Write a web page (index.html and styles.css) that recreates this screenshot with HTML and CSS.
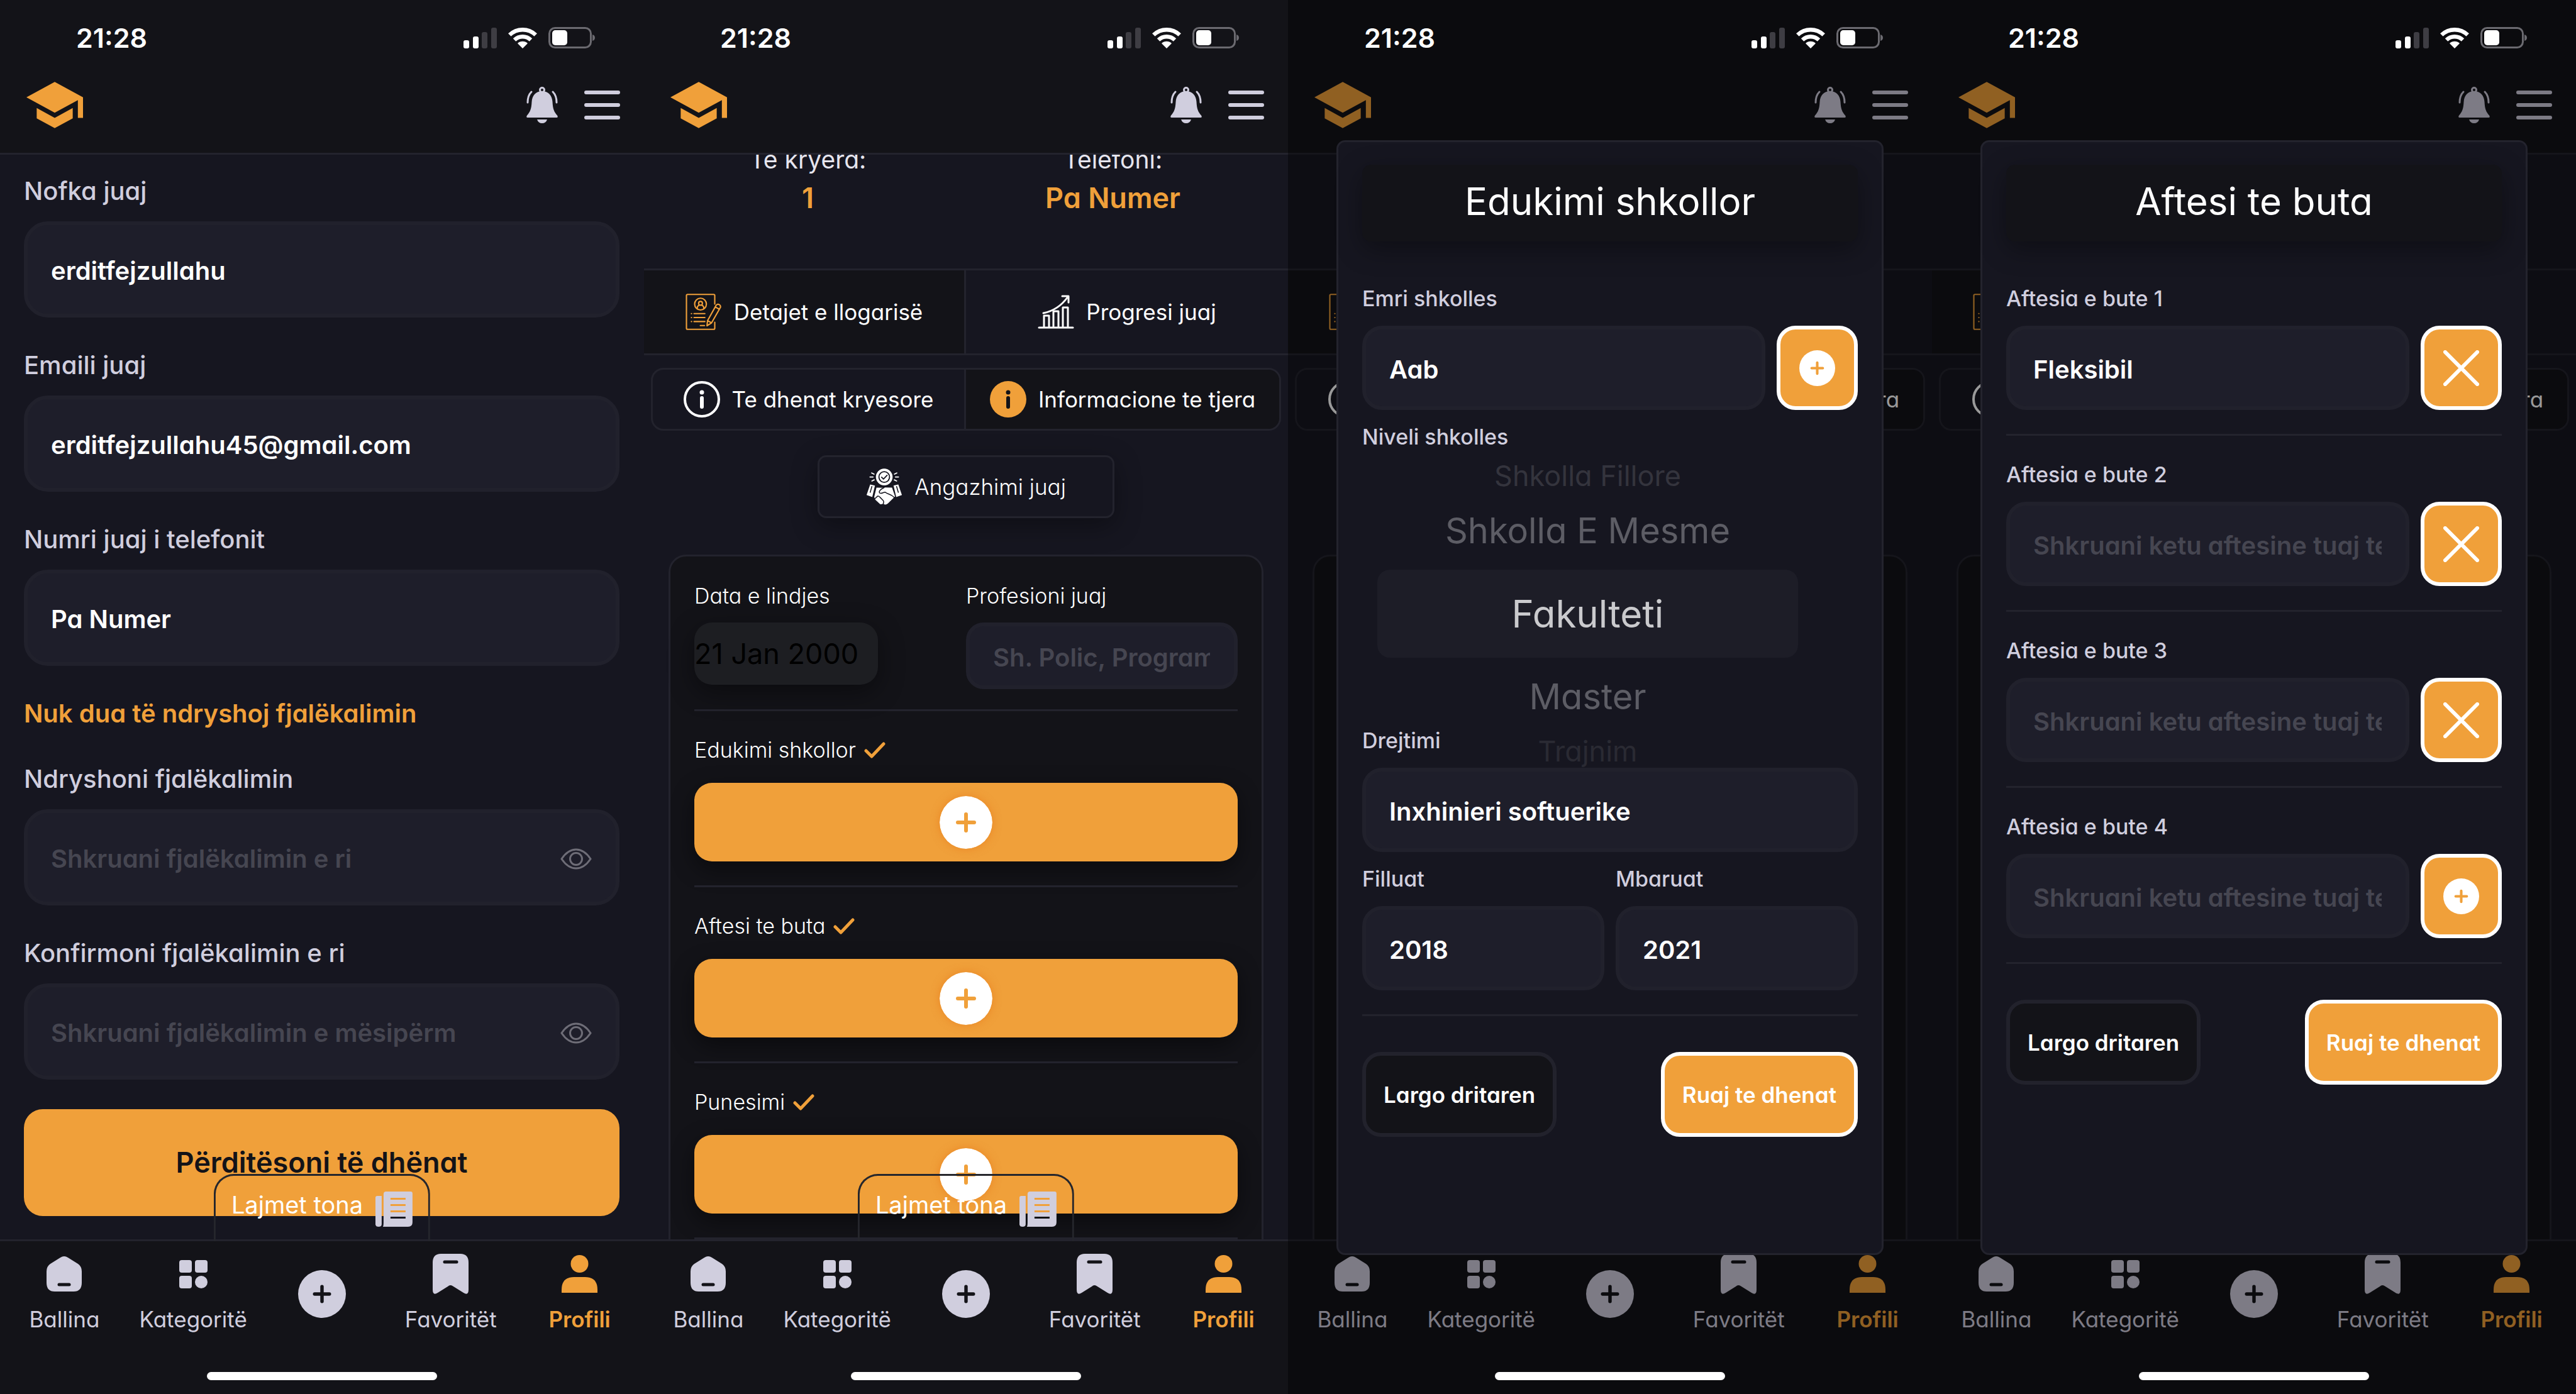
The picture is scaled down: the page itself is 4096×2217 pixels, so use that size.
FILE: index.html
```html
<!DOCTYPE html>
<html lang="sq">
<head>
<meta charset="utf-8">
<title>Profili</title>
<meta name="viewport" content="width=device-width, initial-scale=1">
<link rel="stylesheet" href="styles.css">
</head>
<body>

<svg class="sprite" aria-hidden="true">
  <symbol id="signal" viewBox="0 0 53 33">
    <g fill="currentColor"><rect y="20" width="9" height="13" rx="3"/><rect x="15" y="14" width="9" height="19" rx="3"/></g>
    <g fill="#3e3d43"><rect x="29" y="7" width="9" height="26" rx="3"/><rect x="44" width="9" height="33" rx="3"/></g>
  </symbol>
  <symbol id="wifi" viewBox="0 0 46 34">
    <g fill="none" stroke="currentColor" stroke-width="6.500"><path d="M2.300 12.500A30 30 0 0 1 43.700 12.500"/><path d="M10 20.500A19 19 0 0 1 36 20.500"/></g>
    <path fill="currentColor" d="M23 34 15 26A11.500 11.500 0 0 1 31 26Z"/>
  </symbol>
  <symbol id="battery" viewBox="0 0 74 34">
    <rect x="1.500" y="1.500" width="66" height="31" rx="9" fill="none" stroke="#6b6a70" stroke-width="3"/>
    <rect x="6" y="5" width="24" height="24" rx="5" fill="currentColor"/>
    <path d="M70 12Q74 13 74 17T70 22Z" fill="#6b6a70"/>
  </symbol>
  <symbol id="school" viewBox="1 3 22 18">
    <path fill="currentColor" d="M5 13.180v4L12 21l7-3.820v-4L12 17l-7-3.820zM12 3 1 9l11 6 9-4.910V17h2V9L12 3z"/>
  </symbol>
  <symbol id="bell" viewBox="0 0 50 58">
    <path fill="currentColor" d="M25 7C15 7 9 14 8.500 24C8 35 6 40 1 45.500Q-1 49 2 49H48Q51 49 49 45.500C44 40 42 35 41.500 24C41 14 35 7 25 7ZM17 52H33Q31 58 25 58T17 52Z"/>
    <g fill="none" stroke="currentColor" stroke-width="3" stroke-linecap="round"><circle cx="25" cy="5" r="3.500"/><path d="M8 8C4 12 2 18 2 25"/><path d="M42 8C46 12 48 18 48 25"/></g>
  </symbol>
  <symbol id="menu" viewBox="0 0 57 46">
    <path d="M3 3H54M3 23H54M3 43H54" fill="none" stroke="currentColor" stroke-width="6" stroke-linecap="round"/>
  </symbol>
  <symbol id="account" viewBox="36 37 190 192">
    <g fill="none" stroke="currentColor" stroke-width="7" stroke-linecap="round" stroke-linejoin="round">
      <path d="M189 92V47Q189 41 183 41H46Q40 41 40 47V219Q40 225 46 225H183Q189 225 189 219V188"/>
      <circle cx="114" cy="92" r="31"/><circle cx="114" cy="88" r="10"/>
      <path d="M97 116V110Q98 101 107 98M131 116V110Q130 101 121 98"/>
      <path d="M80 142H137M80 163H137M80 184H137M66 142H67M66 163H67M66 184H67M113 205H135"/>
      <path d="M148 206 151 179 197 97A13 13 0 0 1 219 109L172 191ZM151 179 172 191M191 107 213 119"/>
    </g>
  </symbol>
  <symbol id="progress" viewBox="0 0 58 54">
    <g fill="none" stroke="currentColor" stroke-width="3" stroke-linecap="round" stroke-linejoin="round">
      <path d="M2 52H56"/><path d="M10 51V33H18V51M25 51V26H33V51M40 51V20H48V51"/>
      <path d="M9 29C24 26 38 17 48 3M39 2H49V12"/>
    </g>
  </symbol>
  <symbol id="info" viewBox="0 0 58 58">
    <circle cx="29" cy="29" r="27" fill="none" stroke="currentColor" stroke-width="4"/>
    <circle cx="29" cy="18" r="3.500" fill="currentColor"/><path d="M29 27V41" stroke="currentColor" stroke-width="6" stroke-linecap="round"/>
  </symbol>
  <symbol id="info-filled" viewBox="0 0 58 58">
    <circle cx="29" cy="29" r="29" fill="currentColor"/>
    <circle cx="29" cy="18" r="3.500" fill="#131318"/><path d="M29 27V41" stroke="#131318" stroke-width="6" stroke-linecap="round"/>
  </symbol>
  <symbol id="handshake" viewBox="36 37 190 192">
    <circle cx="131" cy="82" r="44" fill="currentColor"/>
    <circle cx="131" cy="82" r="28" fill="none" stroke="#161620" stroke-width="6"/>
    <g fill="none" stroke-linecap="round" stroke-linejoin="round">
      <path d="M117 83 127 93 146 73" stroke="#161620" stroke-width="6"/>
      <path d="M65 61 77 67M56 82H72M66 103 78 97M197 61 185 67M206 82H190M196 103 184 97" stroke="currentColor" stroke-width="6"/>
    </g>
    <path fill="currentColor" d="M57 121 82 127 68 188 38 177ZM205 121 180 127 194 188 224 177ZM90 138 125 139 137 137 172 138 188 184 151 221Q138 232 128 224L110 226 84 202 78 188Z"/>
    <g fill="none" stroke="#161620" stroke-width="5" stroke-linecap="round" stroke-linejoin="round">
      <path d="M66 132 57 163M196 132 205 163"/>
      <path d="M130 138C112 146 100 158 107 166C114 173 126 162 136 162C152 176 162 168 184 190"/>
      <path d="M82 196 96 183Q103 182 108 188L126 207Q131 215 124 226"/>
    </g>
  </symbol>
  <symbol id="check" viewBox="0 0 34 26">
    <path d="M3 14 12 23 31 3" fill="none" stroke="currentColor" stroke-width="5" stroke-linecap="round" stroke-linejoin="round"/>
  </symbol>
  <symbol id="plus" viewBox="0 0 84 84">
    <circle cx="42" cy="42" r="42" fill="currentColor"/>
    <path class="cut" d="M42 29V55M29 42H55" fill="none" stroke-width="6" stroke-linecap="round"/>
  </symbol>
  <symbol id="cross" viewBox="0 0 58 58">
    <path d="M3 3 55 55M55 3 3 55" stroke="currentColor" stroke-width="6" stroke-linecap="round"/>
  </symbol>
  <symbol id="eye" viewBox="0 0 50 34">
    <g fill="none" stroke="currentColor" stroke-width="3"><path d="M2 17Q12 2 25 2T48 17Q38 32 25 32T2 17Z"/><circle cx="25" cy="17" r="9.500"/></g>
  </symbol>
  <symbol id="news" viewBox="0 0 59 56">
    <path fill="currentColor" fill-rule="evenodd" d="M3 7H10V52Q10 56 5 56T0 51V10Q0 7 3 7ZM17 0H56Q59 0 59 3V49Q59 56 52 56H12Q13 54 13 50V4Q13 0 17 0ZM24 10V13H48V10ZM24 20V23H48V20ZM24 30V33H48V30ZM24 40V43H48V40Z"/>
  </symbol>
  <symbol id="home" viewBox="0 0 56 56">
    <path fill="currentColor" d="M28 0Q31 0 34 2L50 12Q56 16 56 24V42Q56 56 43 56H13Q0 56 0 42V24Q0 16 6 12L22 2Q25 0 28 0Z"/>
    <path d="M20 45H36" stroke="#131318" stroke-width="5" stroke-linecap="round"/>
  </symbol>
  <symbol id="grid" viewBox="0 0 45 45">
    <g fill="currentColor"><rect width="20" height="20" rx="4"/><rect x="25" width="20" height="20" rx="4"/><rect y="25" width="20" height="20" rx="4"/><circle cx="35" cy="35" r="10"/></g>
  </symbol>
  <symbol id="bookmark" viewBox="0 0 57 64">
    <path fill="currentColor" d="M13 0H44Q57 0 57 14V57Q57 67 49 62L33 52Q28 48 24 52L8 62Q0 67 0 57V14Q0 0 13 0Z"/>
    <path d="M19 13H38" stroke="#131318" stroke-width="5" stroke-linecap="round"/>
  </symbol>
  <symbol id="person" viewBox="0 0 57 60">
    <path fill="currentColor" d="M0 60V55Q0 35 20 35H37Q57 35 57 55V60Z"/><circle cx="28.500" cy="14" r="14" fill="currentColor"/>
  </symbol>
</svg>

<div class="board">

  <section class="phone">
    <div class="status"><time>21:28</time><div class="status-icons"><svg class="i-signal"><use href="#signal"/></svg><svg class="i-wifi"><use href="#wifi"/></svg><svg class="i-battery"><use href="#battery"/></svg></div></div>
    <header class="topbar">
      <a href="#" class="brand" aria-label="Kreu"><svg><use href="#school"/></svg></a>
      <button class="icon-btn" aria-label="Njoftimet"><svg class="i-bell"><use href="#bell"/></svg></button>
      <button class="icon-btn" aria-label="Menu"><svg class="i-menu"><use href="#menu"/></svg></button>
    </header>
    <main class="content">
      <form class="account-form">
        <div class="group"><label for="nick">Nofka juaj</label><div class="field"><input id="nick" type="text" value="erditfejzullahu"></div></div>
        <div class="group"><label for="mail">Emaili juaj</label><div class="field"><input id="mail" type="text" value="erditfejzullahu45@gmail.com"></div></div>
        <div class="group"><label for="tel">Numri juaj i telefonit</label><div class="field"><input id="tel" type="text" value="Pa Numer"></div></div>
        <a href="#" class="toggle-link">Nuk dua të ndryshoj fjalëkalimin</a>
        <div class="group"><label for="pw1">Ndryshoni fjalëkalimin</label><div class="field"><input id="pw1" type="password" placeholder="Shkruani fjalëkalimin e ri"><button type="button" class="eye" aria-label="Shfaq"><svg><use href="#eye"/></svg></button></div></div>
        <div class="group"><label for="pw2">Konfirmoni fjalëkalimin e ri</label><div class="field"><input id="pw2" type="password" placeholder="Shkruani fjalëkalimin e mësipërm"><button type="button" class="eye" aria-label="Shfaq"><svg><use href="#eye"/></svg></button></div></div>
        <button type="button" class="submit">Përditësoni të dhënat</button>
      </form>
    </main>
    <nav class="bottom">
      <a href="#" class="news">Lajmet tona<svg><use href="#news"/></svg></a>
      <div class="tabs">
        <a href="#"><span class="glyph"><svg class="i-home"><use href="#home"/></svg></span>Ballina</a>
        <a href="#"><span class="glyph"><svg class="i-grid"><use href="#grid"/></svg></span>Kategoritë</a>
        <a href="#" aria-label="Shto"><svg class="i-plus"><use href="#plus"/></svg></a>
        <a href="#"><span class="glyph"><svg class="i-bookmark"><use href="#bookmark"/></svg></span>Favoritët</a>
        <a href="#" class="active"><span class="glyph"><svg class="i-person"><use href="#person"/></svg></span>Profili</a>
      </div>
      <span class="home-bar"></span>
    </nav>
  </section>

  <section class="phone">
    <div class="status"><time>21:28</time><div class="status-icons"><svg class="i-signal"><use href="#signal"/></svg><svg class="i-wifi"><use href="#wifi"/></svg><svg class="i-battery"><use href="#battery"/></svg></div></div>
    <header class="topbar">
      <a href="#" class="brand" aria-label="Kreu"><svg><use href="#school"/></svg></a>
      <button class="icon-btn" aria-label="Njoftimet"><svg class="i-bell"><use href="#bell"/></svg></button>
      <button class="icon-btn" aria-label="Menu"><svg class="i-menu"><use href="#menu"/></svg></button>
    </header>
    <main class="content">
      <dl class="stats">
        <div><dt>Te kryera:</dt><dd>1</dd></div>
        <div><dt>Telefoni:</dt><dd>Pa Numer</dd></div>
      </dl>
      <div class="switch">
        <button class="on"><svg class="accent"><use href="#account"/></svg>Detajet e llogarisë</button>
        <button><svg><use href="#progress"/></svg>Progresi juaj</button>
      </div>
      <div class="switch pills">
        <button><svg><use href="#info"/></svg>Te dhenat kryesore</button>
        <button class="on"><svg class="accent"><use href="#info-filled"/></svg>Informacione te tjera</button>
      </div>
      <button class="engage"><svg><use href="#handshake"/></svg>Angazhimi juaj</button>
      <div class="card">
        <div class="pair">
          <div class="cell"><label for="dob">Data e lindjes</label><input id="dob" class="date" type="text" value="21 Jan 2000"></div>
          <div class="cell"><label for="job">Profesioni juaj</label><div class="field short"><input id="job" type="text" placeholder="Sh. Polic, Programer"></div></div>
        </div>
        <hr>
        <div class="entry"><h3>Edukimi shkollor<svg><use href="#check"/></svg></h3><button class="add" aria-label="Shto edukimin"><svg><use href="#plus"/></svg></button></div>
        <hr>
        <div class="entry"><h3>Aftesi te buta<svg><use href="#check"/></svg></h3><button class="add" aria-label="Shto aftesi"><svg><use href="#plus"/></svg></button></div>
        <hr>
        <div class="entry"><h3>Punesimi<svg><use href="#check"/></svg></h3><button class="add" aria-label="Shto punesimin"><svg><use href="#plus"/></svg></button></div>
        <hr>
      </div>
    </main>
    <nav class="bottom">
      <a href="#" class="news">Lajmet tona<svg><use href="#news"/></svg></a>
      <div class="tabs">
        <a href="#"><span class="glyph"><svg class="i-home"><use href="#home"/></svg></span>Ballina</a>
        <a href="#"><span class="glyph"><svg class="i-grid"><use href="#grid"/></svg></span>Kategoritë</a>
        <a href="#" aria-label="Shto"><svg class="i-plus"><use href="#plus"/></svg></a>
        <a href="#"><span class="glyph"><svg class="i-bookmark"><use href="#bookmark"/></svg></span>Favoritët</a>
        <a href="#" class="active"><span class="glyph"><svg class="i-person"><use href="#person"/></svg></span>Profili</a>
      </div>
      <span class="home-bar"></span>
    </nav>
  </section>

  <section class="phone">
    <div class="status"><time>21:28</time><div class="status-icons"><svg class="i-signal"><use href="#signal"/></svg><svg class="i-wifi"><use href="#wifi"/></svg><svg class="i-battery"><use href="#battery"/></svg></div></div>
    <header class="topbar">
      <a href="#" class="brand" aria-label="Kreu"><svg><use href="#school"/></svg></a>
      <button class="icon-btn" aria-label="Njoftimet"><svg class="i-bell"><use href="#bell"/></svg></button>
      <button class="icon-btn" aria-label="Menu"><svg class="i-menu"><use href="#menu"/></svg></button>
    </header>
    <main class="content covered">
      <div class="stats"></div>
      <div class="switch">
        <button class="on lead"><svg class="accent"><use href="#account"/></svg></button>
        <button></button>
      </div>
      <div class="switch pills">
        <button class="lead"><svg><use href="#info"/></svg></button>
        <button class="on"><svg class="accent"><use href="#info-filled"/></svg>Informacione te tjera</button>
      </div>
      <div class="engage-space"></div>
      <div class="card"></div>
    </main>
    <nav class="bottom">
      <div class="tabs">
        <a href="#"><span class="glyph"><svg class="i-home"><use href="#home"/></svg></span>Ballina</a>
        <a href="#"><span class="glyph"><svg class="i-grid"><use href="#grid"/></svg></span>Kategoritë</a>
        <a href="#" aria-label="Shto"><svg class="i-plus"><use href="#plus"/></svg></a>
        <a href="#"><span class="glyph"><svg class="i-bookmark"><use href="#bookmark"/></svg></span>Favoritët</a>
        <a href="#" class="active"><span class="glyph"><svg class="i-person"><use href="#person"/></svg></span>Profili</a>
      </div>
      <span class="home-bar"></span>
    </nav>
    <div class="scrim"></div>
    <div class="modal" role="dialog" aria-labelledby="edu-title">
      <h2 id="edu-title">Edukimi shkollor</h2>
      <div class="group">
        <label for="school-name">Emri shkolles</label>
        <div class="row"><div class="field"><input id="school-name" type="text" value="Aab"></div><button class="square" aria-label="Shto"><svg><use href="#plus"/></svg></button></div>
      </div>
      <div class="group wheel-group">
        <span class="caption" id="level">Niveli shkolles</span>
        <ul class="wheel" role="listbox" aria-labelledby="level">
          <li class="far">Shkolla Fillore</li>
          <li class="near">Shkolla E Mesme</li>
          <li class="picked">Fakulteti</li>
          <li class="near">Master</li>
          <li class="far last">Trajnim</li>
        </ul>
      </div>
      <div class="group"><label for="major">Drejtimi</label><div class="field"><input id="major" type="text" value="Inxhinieri softuerike"></div></div>
      <div class="row years">
        <div class="group"><label for="from">Filluat</label><div class="field"><input id="from" type="text" value="2018"></div></div>
        <div class="group"><label for="to">Mbaruat</label><div class="field"><input id="to" type="text" value="2021"></div></div>
      </div>
      <hr>
      <div class="actions"><button class="action">Largo dritaren</button><button class="action primary">Ruaj te dhenat</button></div>
    </div>
  </section>

  <section class="phone">
    <div class="status"><time>21:28</time><div class="status-icons"><svg class="i-signal"><use href="#signal"/></svg><svg class="i-wifi"><use href="#wifi"/></svg><svg class="i-battery"><use href="#battery"/></svg></div></div>
    <header class="topbar">
      <a href="#" class="brand" aria-label="Kreu"><svg><use href="#school"/></svg></a>
      <button class="icon-btn" aria-label="Njoftimet"><svg class="i-bell"><use href="#bell"/></svg></button>
      <button class="icon-btn" aria-label="Menu"><svg class="i-menu"><use href="#menu"/></svg></button>
    </header>
    <main class="content covered">
      <div class="stats"></div>
      <div class="switch">
        <button class="on lead"><svg class="accent"><use href="#account"/></svg></button>
        <button></button>
      </div>
      <div class="switch pills">
        <button class="lead"><svg><use href="#info"/></svg></button>
        <button class="on"><svg class="accent"><use href="#info-filled"/></svg>Informacione te tjera</button>
      </div>
      <div class="engage-space"></div>
      <div class="card"></div>
    </main>
    <nav class="bottom">
      <div class="tabs">
        <a href="#"><span class="glyph"><svg class="i-home"><use href="#home"/></svg></span>Ballina</a>
        <a href="#"><span class="glyph"><svg class="i-grid"><use href="#grid"/></svg></span>Kategoritë</a>
        <a href="#" aria-label="Shto"><svg class="i-plus"><use href="#plus"/></svg></a>
        <a href="#"><span class="glyph"><svg class="i-bookmark"><use href="#bookmark"/></svg></span>Favoritët</a>
        <a href="#" class="active"><span class="glyph"><svg class="i-person"><use href="#person"/></svg></span>Profili</a>
      </div>
      <span class="home-bar"></span>
    </nav>
    <div class="scrim"></div>
    <div class="modal" role="dialog" aria-labelledby="skill-title">
      <h2 id="skill-title">Aftesi te buta</h2>
      <div class="group">
        <label for="s1">Aftesia e bute 1</label>
        <div class="row"><div class="field"><input id="s1" type="text" value="Fleksibil"></div><button class="square" aria-label="Hiq"><svg><use href="#cross"/></svg></button></div>
      </div>
      <hr>
      <div class="group">
        <label for="s2">Aftesia e bute 2</label>
        <div class="row"><div class="field"><input id="s2" type="text" placeholder="Shkruani ketu aftesine tuaj te bute"></div><button class="square" aria-label="Hiq"><svg><use href="#cross"/></svg></button></div>
      </div>
      <hr>
      <div class="group">
        <label for="s3">Aftesia e bute 3</label>
        <div class="row"><div class="field"><input id="s3" type="text" placeholder="Shkruani ketu aftesine tuaj te bute"></div><button class="square" aria-label="Hiq"><svg><use href="#cross"/></svg></button></div>
      </div>
      <hr>
      <div class="group">
        <label for="s4">Aftesia e bute 4</label>
        <div class="row"><div class="field"><input id="s4" type="text" placeholder="Shkruani ketu aftesine tuaj te bute"></div><button class="square" aria-label="Shto"><svg><use href="#plus"/></svg></button></div>
      </div>
      <hr>
      <div class="actions"><button class="action">Largo dritaren</button><button class="action primary">Ruaj te dhenat</button></div>
    </div>
  </section>

</div>
</body>
</html>
```

FILE: styles.css
```css
:root {
  --bg: #161620;
  --dark: #131318;
  --line: #23232d;
  --field: #1e1e2a;
  --orange: #f0a03a;
  --pale: #d0cede;
}

* { box-sizing: border-box; }

body {
  margin: 0;
  background: var(--bg);
  color: #fff;
  font-family: Inter, "Open Sans", sans-serif;
  font-feature-settings: "cv11";
  font-size: 35px;
  line-height: 46px;
}

button, input {
  font: inherit;
  font-feature-settings: inherit;
  color: inherit;
  border: 0;
  background: none;
  padding: 0;
  margin: 0;
}

a { color: inherit; text-decoration: none; }
svg { display: block; flex: none; }
.sprite { position: absolute; width: 0; height: 0; }

.board {
  display: grid;
  grid-template-columns: repeat(4, 1fr);
  height: 100vh;
}

.phone {
  position: relative;
  display: flex;
  flex-direction: column;
  min-width: 0;
  min-height: 0;
  overflow: hidden;
}

/* status bar */
.status {
  display: flex;
  align-items: center;
  justify-content: space-between;
  height: 120px;
  padding: 0 78px 0 121px;
  background: var(--dark);
}
.status time, .status-icons { position: relative; z-index: 5; }
.status time {
  font-size: 43px;
  font-weight: 600;
  font-feature-settings: normal;
}
.status-icons { display: flex; align-items: center; gap: 18px; }
.i-signal { width: 53px; height: 33px; }
.i-wifi { width: 46px; height: 34px; }
.i-battery { width: 74px; height: 34px; }

/* top bar */
.topbar {
  display: flex;
  align-items: center;
  gap: 42px;
  padding: 0 38px 29px 42px;
  height: 126px;
  background: var(--dark);
  border-bottom: 3px solid var(--line);
  color: var(--pale);
}
.brand { margin-right: auto; color: var(--orange); }
.brand svg { width: 90px; height: 74px; }
.i-bell { width: 50px; height: 58px; }
.i-menu { width: 57px; height: 46px; }

.content {
  flex: 1;
  min-height: 0;
  overflow: hidden;
  display: flex;
  flex-direction: column;
}
.content > * { flex: none; }

/* fields */
.group { display: flex; flex-direction: column; gap: 20px; }
.field {
  display: flex;
  align-items: center;
  flex: 1;
  min-width: 0;
  height: 134px;
  padding: 4px 38px 0 37px;
  background: var(--field);
  border: 6px solid #21212c;
  border-radius: 32px;
}
.field input {
  flex: 1;
  min-width: 0;
  width: 100%;
  height: 60px;
  font-size: 40px;
  font-weight: 600;
  outline: 0;
}
.field input::placeholder { color: #464651; opacity: 1; }

.account-form {
  display: flex;
  flex-direction: column;
  gap: 47px;
  padding: 29px 39px 0 38px;
}
.account-form .group { gap: 20px; }
.account-form label, .toggle-link {
  font-size: 40px;
  line-height: 57px;
  font-weight: 500;
  color: var(--pale);
}
.account-form .field { flex: none; height: 153px; border-radius: 38px; }
.account-form .toggle-link { font-weight: 600; color: var(--orange); }
.eye { color: #6e6d77; }
.eye svg { width: 50px; height: 34px; }
.submit {
  height: 170px;
  border-radius: 30px;
  background: var(--orange);
  color: var(--dark);
  font-size: 45px;
  font-weight: 600;
}

/* profile summary */
.stats {
  display: grid;
  grid-template-columns: 1fr 1fr;
  min-height: 202px;
  margin: -21px 36px 0 18px;
  text-align: center;
}
.stats dt { font-size: 39px; line-height: 58px; color: #e6e5ee; }
.stats dd {
  margin: 4px 0 0;
  font-size: 45px;
  line-height: 56px;
  font-weight: 600;
  color: var(--orange);
}

.switch {
  display: grid;
  grid-template-columns: 1fr 1fr;
  height: 138px;
  border: solid var(--line);
  border-width: 3px 0;
}
.switch button {
  display: flex;
  align-items: center;
  justify-content: center;
  gap: 19px;
  min-width: 0;
  white-space: nowrap;
}
.switch button:first-child { border-right: 3px solid var(--line); }
.switch .on { background: var(--dark); }
.switch svg, .engage svg { width: 58px; height: 58px; }
.accent { color: var(--orange); }
.pills {
  height: 100px;
  margin: 20px 11px 0;
  border-width: 3px;
  border-radius: 20px;
  overflow: hidden;
}
.covered .lead { justify-content: flex-start; padding-left: 65px; }
.covered .pills .lead { padding-left: 50px; }

.engage {
  display: flex;
  align-items: center;
  justify-content: center;
  align-self: center;
  gap: 19px;
  width: 472px;
  height: 100px;
  margin-top: 39px;
  border: 3px solid var(--line);
  border-radius: 14px;
  box-shadow: 0 12px 40px rgba(0, 0, 0, .35);
  font-weight: 300;
}
.engage-space { height: 139px; }

.card {
  margin: 58px 39px 0;
  min-height: 1200px;
  padding: 40px 38px;
  background: var(--dark);
  border: 3px solid var(--line);
  border-radius: 28px;
}
.pair { display: grid; grid-template-columns: 1fr 1fr; align-items: start; }
.cell { display: flex; flex-direction: column; align-items: flex-start; gap: 19px; }
.cell label, .entry h3 { font-size: 34px; font-weight: 300; }
.date {
  width: 292px;
  height: 99px;
  border-radius: 28px;
  background: #1d1e22;
  color: #000;
  font-size: 45px;
  font-feature-settings: normal;
  box-shadow: 0 12px 40px rgba(0, 0, 0, .4);
}
.short { flex: none; width: 100%; height: 106px; border-radius: 28px; }

hr {
  width: 100%;
  height: 3px;
  margin: 38px 0 39px;
  border: 0;
  background: var(--line);
}
.pair + hr { margin-top: 32px; }
.entry h3 {
  display: flex;
  align-items: center;
  gap: 13px;
  margin: 0 0 29px;
}
.entry h3 svg { width: 34px; height: 26px; color: var(--orange); }
.add {
  display: flex;
  align-items: center;
  justify-content: center;
  width: 100%;
  height: 125px;
  border-radius: 28px;
  background: var(--orange);
  color: #fff;
  box-shadow: 0 12px 36px rgba(0, 0, 0, .45);
}
.add svg { width: 84px; height: 84px; border-radius: 50%; box-shadow: 0 0 14px rgba(230, 110, 20, .5); }
.cut { stroke: var(--orange); }

/* bottom navigation */
.bottom {
  position: relative;
  display: flex;
  flex-direction: column;
  height: 246px;
  padding: 20px 0 22px;
  background: var(--dark);
  border-top: 3px solid var(--line);
}
.tabs {
  display: grid;
  grid-template-columns: repeat(5, 1fr);
  align-items: center;
  color: var(--pale);
}
.tabs a { display: flex; flex-direction: column; align-items: center; }
.tabs .active { color: var(--orange); font-weight: 600; }
.glyph {
  display: flex;
  align-items: center;
  height: 64px;
  margin-bottom: 17px;
}
.i-home { width: 56px; height: 56px; }
.i-grid { width: 45px; height: 45px; }
.i-bookmark { width: 57px; height: 64px; }
.i-person { width: 57px; height: 60px; }
.i-plus { width: 76px; height: 76px; }
.tabs .i-plus { --orange: #131318; }
.home-bar {
  position: relative;
  z-index: 5;
  align-self: center;
  width: 366px;
  height: 13px;
  margin-top: auto;
  border-radius: 7px;
  background: #fff;
}
.news {
  position: absolute;
  left: 50%;
  bottom: 100%;
  transform: translateX(-50%);
  display: flex;
  align-items: flex-start;
  gap: 20px;
  height: 107px;
  padding: 25px 25px 0;
  border: 3px solid #25262c;
  border-bottom: 0;
  border-radius: 32px 32px 0 0;
  font-size: 38px;
  line-height: 42px;
  font-feature-settings: normal;
  white-space: nowrap;
}
.news svg { width: 59px; height: 56px; color: var(--pale); }

/* dialogs */
.scrim {
  position: absolute;
  inset: 0;
  z-index: 2;
  background: rgba(0, 0, 0, .4);
}
.modal {
  position: absolute;
  inset: 223px 77px 221px;
  z-index: 3;
  display: flex;
  flex-direction: column;
  padding: 36px 38px;
  background: var(--bg);
  border: 3px solid var(--line);
  border-radius: 14px;
}
.modal h2 {
  margin: 0 0 68px;
  padding-bottom: 6px;
  font-size: 60px;
  font-weight: 400;
  line-height: 116px;
  text-align: center;
  background: var(--dark);
  border-radius: 14px;
  box-shadow: 0 12px 40px rgba(0, 0, 0, .35);
}
.modal label, .caption { font-size: 34px; font-weight: 500; color: var(--pale); }
.modal .group + .group, .years { margin-top: 20px; }
.modal .group > .field { flex: none; }
.row { display: flex; gap: 18px; }
.years .group { flex: 1; min-width: 0; }
.modal .years .group + .group { margin-top: 0; }
.square {
  display: flex;
  align-items: center;
  justify-content: center;
  flex: none;
  width: 129px;
  height: 134px;
  border: 6px solid #fff;
  border-radius: 30px;
  background: var(--orange);
  color: #fff;
}
.square svg { width: 57px; height: 57px; }

.wheel-group { gap: 0; }
.modal .wheel-group + .group { margin-top: -79px; }
.wheel {
  display: flex;
  flex-direction: column;
  list-style: none;
  margin: 0 71px 0 0;
  padding: 0;
  text-align: center;
  white-space: nowrap;
}
.far { font-size: 45px; line-height: 78px; color: #34343d; }
.last { color: #2a2a33; }
.near { font-size: 56px; line-height: 96px; color: #5d5d65; }
.picked {
  margin: 14px 24px;
  font-size: 60px;
  line-height: 140px;
  color: #cacacd;
  background: #1d1d27;
  border-radius: 20px;
}

.modal .years + hr, .modal .group + hr { margin-bottom: 39px; }
.actions { display: flex; justify-content: space-between; margin-top: 18px; }
.action {
  height: 135px;
  padding: 0 28px;
  border: 6px solid #22222c;
  border-radius: 30px;
  background: var(--dark);
  font-weight: 600;
}
.primary { border-color: #fff; background: var(--orange); }
```
